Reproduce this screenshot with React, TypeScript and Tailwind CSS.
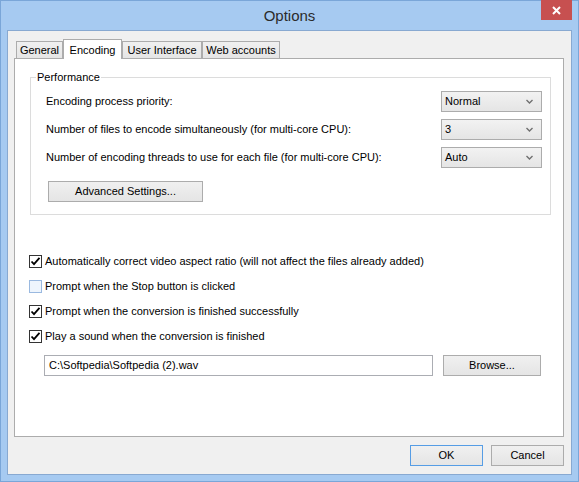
import React from 'react';

const tabs = [
  { label: 'General', w: 'w-[47px]' },
  { label: 'Encoding', w: 'w-[59px]', active: true },
  { label: 'User Interface', w: 'w-[80px]' },
  { label: 'Web accounts', w: 'w-[78px]' },
];

const perfRows = [
  { label: 'Encoding process priority:', value: 'Normal' },
  { label: 'Number of files to encode simultaneously (for multi-core CPU):', value: '3' },
  { label: 'Number of encoding threads to use for each file (for multi-core CPU):', value: 'Auto' },
];

const checks = [
  { label: 'Automatically correct video aspect ratio (will not affect the files already added)', checked: true },
  { label: 'Prompt when the Stop button is clicked', checked: false },
  { label: 'Prompt when the conversion is finished successfully', checked: true },
  { label: 'Play a sound when the conversion is finished', checked: true },
];

function Chevron() {
  return (
    <svg width="7" height="5" viewBox="0 0 7 5" className="shrink-0">
      <path d="M0.5 1 L3.5 4 L6.5 1" fill="none" stroke="#707070" strokeWidth="1.4" />
    </svg>
  );
}

function Dropdown({ value }: { value: string }) {
  return (
    <div className="flex items-center justify-between w-[101px] h-[21px] pl-[3px] pr-[8px] border border-[#acacac] bg-linear-to-b from-[#f2f2f2] to-[#e5e5e5]">
      <span>{value}</span>
      <Chevron />
    </div>
  );
}

function CheckBox({ checked }: { checked: boolean }) {
  if (!checked) {
    return <div className="w-[13px] h-[13px] shrink-0 border border-[#9ab9e0] bg-[#eef5fd]" />;
  }
  return (
    <div className="w-[13px] h-[13px] shrink-0 border border-[#333333] bg-white flex items-center justify-center">
      <svg width="11" height="11" viewBox="0 0 11 11">
        <path d="M1.5 5.5 L4 8.2 L9.5 1.8" fill="none" stroke="#000" strokeWidth="1.8" />
      </svg>
    </div>
  );
}

export default function App() {
  return (
    <div className="w-[579px] h-[482px] bg-[#a6caf1] border border-[#7aa6d8] flex flex-col font-['Liberation_Sans',Arial,sans-serif] text-[11px] text-black">
      {/* title bar */}
      <div className="h-[29px] grid grid-cols-[1fr_auto_1fr]">
        <div />
        <div className="pt-[6px] text-[15px] text-[#2b2b2b] leading-[18px]">Options</div>
        <div className="flex justify-end pr-[6px]">
          <div className="w-[31px] h-[20px] -mt-px bg-[#c75050] flex items-center justify-center">
            <svg width="9" height="9" viewBox="0 0 9 9">
              <path d="M1 1 L8 8 M8 1 L1 8" stroke="#fff" strokeWidth="2" />
            </svg>
          </div>
        </div>
      </div>

      {/* client area */}
      <div className="ml-[6px] w-[565px] h-[445px] bg-[#f0f0f0] border border-[#88a9d1] pt-[8px] pl-[6px] pr-[7px] pb-[8px] flex flex-col">
        <div className="flex items-end h-[19px] pl-[2px]">
          {tabs.map((t) =>
            t.active ? (
              <div
                key={t.label}
                className={`${t.w} h-[20px] -mb-px relative z-10 bg-white border border-b-0 border-[#acacac] flex items-start justify-center pt-[2px]`}
              >
                {t.label}
              </div>
            ) : (
              <div
                key={t.label}
                className={`${t.w} h-[17px] bg-linear-to-b from-[#f0f0f0] to-[#e5e5e5] border border-b-0 border-[#acacac] flex items-center justify-center`}
              >
                {t.label}
              </div>
            )
          )}
        </div>

        {/* tab panel */}
        <div className="w-[550px] h-[379px] bg-white border border-[#acacac] flex flex-col">
          <fieldset className="mt-[10px] ml-[15px] w-[521px] border border-[#dcdcdc] pl-[15px] pr-[8px] pb-[12px]">
            <legend className="-ml-[10px] px-[1px] leading-[16px]">Performance</legend>
            <div className="pt-[6px] flex flex-col gap-[7px]">
              {perfRows.map((r) => (
                <div key={r.label} className="flex items-center justify-between h-[21px]">
                  <span>{r.label}</span>
                  <Dropdown value={r.value} />
                </div>
              ))}
            </div>
            <div className="mt-[13px] ml-[2px] w-[155px] h-[21px] border border-[#acacac] bg-linear-to-b from-[#f0f0f0] to-[#e5e5e5] flex items-center justify-center">
              Advanced Settings...
            </div>
          </fieldset>

          <div className="mt-[38px] ml-[14px] flex flex-col gap-[9px]">
            {checks.map((c) => (
              <div key={c.label} className="flex items-center h-[16px] gap-[3px]">
                <CheckBox checked={c.checked} />
                <span>{c.label}</span>
              </div>
            ))}
          </div>

          <div className="mt-[11px] ml-[29px] flex items-center gap-[10px]">
            <div className="w-[389px] h-[21px] border border-[#abadb3] bg-white flex items-center pl-[4px]">
              C:\Softpedia\Softpedia (2).wav
            </div>
            <div className="w-[98px] h-[21px] border border-[#acacac] bg-linear-to-b from-[#f0f0f0] to-[#e5e5e5] flex items-center justify-center">
              Browse...
            </div>
          </div>
        </div>

        {/* dialog buttons */}
        <div className="mt-[8px] flex justify-end gap-[8px]">
          <div className="w-[73px] h-[21px] border border-[#569de5] bg-linear-to-b from-[#f0f0f0] to-[#e5e5e5] flex items-center justify-center">
            OK
          </div>
          <div className="w-[73px] h-[21px] border border-[#acacac] bg-linear-to-b from-[#f0f0f0] to-[#e5e5e5] flex items-center justify-center">
            Cancel
          </div>
        </div>
      </div>
    </div>
  );
}
